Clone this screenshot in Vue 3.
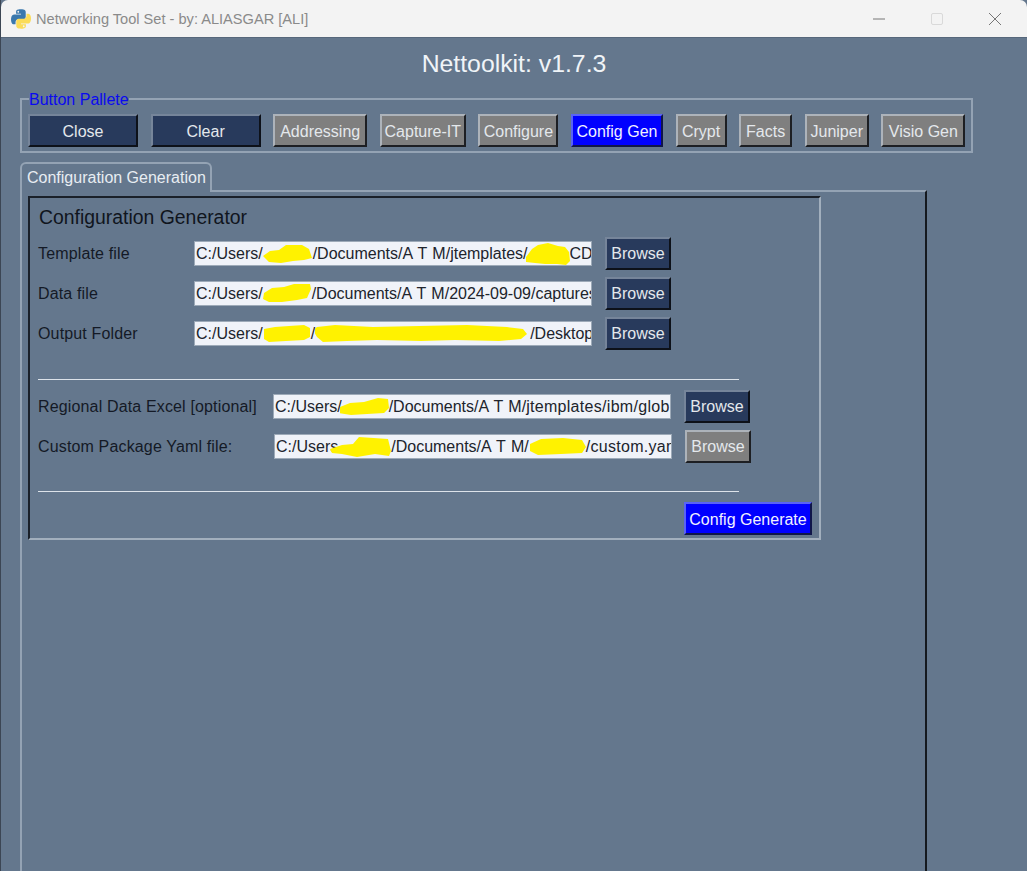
<script setup>
const paletteButtons = [
  { label: "Close", kind: "navy", width: 110 },
  { label: "Clear", kind: "navy", width: 110 },
  { label: "Addressing", kind: "grey", width: 94 },
  { label: "Capture-IT", kind: "grey", width: 86 },
  { label: "Configure", kind: "grey", width: 80 },
  { label: "Config Gen", kind: "blue", width: 92 },
  { label: "Crypt", kind: "grey", width: 51 },
  { label: "Facts", kind: "grey", width: 53 },
  { label: "Juniper", kind: "grey", width: 64 },
  { label: "Visio Gen", kind: "grey", width: 84 },
];
</script>

<template>
  <div class="window">
    <header class="titlebar">
      <svg class="logo" viewBox="0 0 110 110">
        <path
          fill="#3a78ad"
          d="M54 2c-5 0-9 .4-13 1.100C30 5 28 9 28 16v10h27v4H18C10 30 4 35 2 44c-2.500 10-2.500 17 0 27 2 8 6 13 14 13h9V72c0-9 8-16 16-16h27c7 0 13-6 13-13V16c0-7-6-12-13-13.500C64 2.300 59 2 54 2zM40 10a5 5 0 1 1 0 10 5 5 0 0 1 0-10z"
        />
        <path
          fill="#fbdc57"
          transform="rotate(180 55 55)"
          d="M54 2c-5 0-9 .4-13 1.100C30 5 28 9 28 16v10h27v4H18C10 30 4 35 2 44c-2.500 10-2.500 17 0 27 2 8 6 13 14 13h9V72c0-9 8-16 16-16h27c7 0 13-6 13-13V16c0-7-6-12-13-13.500C64 2.300 59 2 54 2zM40 10a5 5 0 1 1 0 10 5 5 0 0 1 0-10z"
        />
      </svg>
      <span class="window-title">Networking Tool Set - by: ALIASGAR [ALI]</span>
      <div class="controls">
        <span class="control"><svg viewBox="0 0 14 14"><path d="M1 7h12" /></svg></span>
        <span class="control"><svg class="off" viewBox="0 0 14 14"><rect x="1.500" y="1.500" width="11" height="11" rx="1.500" /></svg></span>
        <span class="control"><svg viewBox="0 0 14 14"><path d="M1 1l12 12M13 1L1 13" /></svg></span>
      </div>
    </header>

    <main class="content">
      <h1 class="app-title">Nettoolkit: v1.7.3</h1>

      <fieldset class="palette">
        <legend>Button Pallete</legend>
        <button
          v-for="btn in paletteButtons"
          :key="btn.label"
          class="btn"
          :class="btn.kind"
          :style="{ width: btn.width + 'px' }"
        >
          {{ btn.label }}
        </button>
      </fieldset>

      <div class="tab">Configuration Generation</div>

      <section class="tab-body">
        <div class="frame">
          <h2>Configuration Generator</h2>

          <div class="row">
            <label class="label">Template file</label>
            <div class="field">C:/Users/<svg class="blot" width="50" height="22" viewBox="0 0 50 22" preserveAspectRatio="none"><path d="M0 14 7 9l9-1 7-5 16 0 7 4 3 9-8 2-11 1-12 2-12-1z" /></svg>/Documents/A T M/jtemplates/<svg class="blot pull" width="44" height="24" viewBox="0 0 44 24" preserveAspectRatio="none"><path d="M0 16 6 8l6-4 10-2 10 3 7 1 4 5 1 9-4 4-9-1-12 0-10-1-9-1z" /></svg>CD</div>
            <button class="btn navy browse">Browse</button>
          </div>
          <div class="row">
            <label class="label">Data file</label>
            <div class="field">C:/Users/<svg class="blot" width="49" height="22" viewBox="0 0 49 22" preserveAspectRatio="none"><path d="M1 11 9 6l12-1 10-3 16 0 1 5-4 9-10 2-15 2-13 0-6-3z" /></svg>/Documents/A T M/2024-09-09/captures</div>
            <button class="btn navy browse">Browse</button>
          </div>
          <div class="row">
            <label class="label">Output Folder</label>
            <div class="field">C:/Users/<svg class="blot" width="48" height="20" viewBox="0 0 48 20" preserveAspectRatio="none"><path d="M1 6 12 4l14-1 15-1 6 3 0 9-6 3-18 1-17 1-5-3z" /></svg>/<svg class="blot" width="215" height="22" viewBox="0 0 215 22" preserveAspectRatio="none"><path d="M2 5 20 3l38 2 46-1 48-1 40 2 16 2 4 5-6 5-22 2-44-1-34 1-44-1-30 1-24 1-6-5-4-7z" /></svg>/Desktop</div>
            <button class="btn navy browse">Browse</button>
          </div>

          <hr class="rule" />

          <div class="row">
            <label class="label long">Regional Data Excel [optional]</label>
            <div class="field">C:/Users/<svg class="blot pull" width="49" height="18" viewBox="0 0 49 18" preserveAspectRatio="none"><path d="M0 10 10 6l14-1 14-4 10 1 1 9-5 5-17 1-16 1-12-2z" /></svg>/Documents/A T M/<span class="tail">jtemplates/ibm/glob</span></div>
            <button class="btn navy browse">Browse</button>
          </div>
          <div class="row second">
            <label class="label long">Custom Package Yaml file:</label>
            <div class="field">C:/Users<svg class="blot deep" width="61" height="22" viewBox="0 0 61 22" preserveAspectRatio="none"><path d="M0 14 12 10l11-1 6-7 29 2 3 12-2 5-14-2-18 3-15-3-10-1z" /></svg>/Documents/A T M/<svg class="blot" width="57" height="20" viewBox="0 0 57 20" preserveAspectRatio="none"><path d="M1 8 12 3l22-1 19 2 4 7-4 6-21 1-23 1-8-4z" /></svg><span class="tail">/custom.yaml</span></div>
            <button class="btn grey browse">Browse</button>
          </div>

          <hr class="rule lower" />

          <div class="actions">
            <button class="btn blue generate">Config Generate</button>
          </div>
        </div>
      </section>
    </main>
  </div>
</template>

<style scoped>
.window {
  width: 1027px;
  height: 871px;
  overflow: hidden;
  display: flex;
  flex-direction: column;
  background: #64778d;
  font-family: "Liberation Sans", Arial, sans-serif;
  border-left: 1px solid #3c4654;
  box-sizing: border-box;
}

.titlebar {
  height: 37px;
  flex: none;
  background: #f3f3f3;
  display: flex;
  align-items: center;
  border-top-left-radius: 7px;
  border-top-right-radius: 7px;
  border-bottom: 1px solid #56677b;
  box-sizing: content-box;
}

.logo {
  width: 20px;
  height: 20px;
  margin-left: 10px;
  margin-right: 5px;
}

.window-title {
  font-size: 14.6px;
  color: #8a8a8a;
}

.controls {
  margin-left: auto;
  display: flex;
  margin-right: 3px;
}

.control {
  width: 58px;
  display: flex;
  justify-content: center;
}

.control svg {
  width: 14px;
  height: 14px;
  fill: none;
  stroke: #767676;
  stroke-width: 1;
}

.control svg.off {
  stroke: #d9d9d9;
}

.content {
  flex: 1;
  padding-left: 19px;
  min-height: 0;
}

.app-title {
  margin: 0 0 0 -19px;
  height: 51px;
  padding-top: 11px;
  box-sizing: border-box;
  text-align: center;
  font-size: 24.8px;
  line-height: 30px;
  font-weight: normal;
  color: #f0f4f8;
}

.palette {
  width: 953px;
  height: 64px;
  margin: 0;
  padding: 0 0 0 6px;
  box-sizing: border-box;
  border: 2px solid #94a3b4;
  display: flex;
  align-items: flex-start;
  gap: 12.6px;
}

.palette legend {
  font-size: 16px;
  line-height: 18px;
  color: #0a0af0;
  padding: 2px 0 0;
  margin-left: 1px;
}

.btn {
  height: 33px;
  padding: 2px 0 0;
  box-sizing: border-box;
  border: 2px solid;
  font-family: inherit;
  font-size: 16px;
  color: #e4e8ec;
  white-space: nowrap;
  cursor: pointer;
}

.palette .btn {
  margin-top: 5px;
}

.navy {
  background: #283a5c;
  border-color: #76859a #0d1119 #0d1119 #76859a;
}

.grey {
  background: #7f7f7f;
  border-color: #adb3ba #1d1f23 #1d1f23 #adb3ba;
}

.blue {
  background: #0000ff;
  color: #f2f2ff;
  border-color: #5a63f5 #10164a #10164a #5a63f5;
}

.tab {
  width: 192px;
  height: 30px;
  margin-top: 9px;
  box-sizing: border-box;
  padding: 5px 0 0 5px;
  border: 2px solid #94a3b4;
  border-bottom: none;
  border-radius: 6px 6px 0 0;
  font-size: 16px;
  line-height: 18px;
  color: #e8edf2;
  position: relative;
  z-index: 1;
  background: #64778d;
}

.tab-body {
  width: 907px;
  height: 690px;
  margin-top: -2px;
  box-sizing: border-box;
  padding: 4px 0 0 6px;
  border-top: 2px solid #94a3b4;
  border-left: 2px solid #94a3b4;
  border-right: 2px solid #15191f;
}

.frame {
  width: 793px;
  height: 344px;
  box-sizing: border-box;
  padding: 7px 7px 0 9px;
  border: 2px solid;
  border-color: #1a2029 #a2afbd #a2afbd #1a2029;
}

.frame h2 {
  margin: 0;
  height: 32px;
  font-size: 19.4px;
  line-height: 24px;
  font-weight: normal;
  color: #10151d;
}

.row {
  display: flex;
  align-items: center;
  height: 32px;
  margin-bottom: 8px;
  gap: 13px;
}

.label {
  width: 143px;
  flex: none;
  margin-left: -1px;
  padding-top: 1px;
  font-size: 16px;
  letter-spacing: 0.15px;
  color: #141a26;
  white-space: nowrap;
}

.label.long {
  width: 222px;
}

.second .label.long {
  width: 223px;
}

.field {
  width: 398px;
  height: 25px;
  flex: none;
  box-sizing: border-box;
  padding-left: 1px;
  border: 1px solid #9daab8;
  background: #f0f3f9;
  font-size: 16px;
  line-height: 23px;
  word-spacing: 1px;
  color: #20242c;
  white-space: nowrap;
  overflow: hidden;
}

.tail {
  letter-spacing: 0.3px;
}

.blot {
  vertical-align: middle;
  margin-top: -2px;
}

.blot.pull {
  margin-left: -2px;
}

.blot.deep {
  margin-left: -8px;
}

.blot path {
  fill: #fff200;
}

.browse {
  width: 66px;
}

.generate {
  width: 128px;
}

.rule {
  width: 701px;
  height: 1px;
  margin: 30px 0 10px -1px;
  border: none;
  background: #dde3ea;
}

.rule.lower {
  margin-top: 29px;
  margin-bottom: 10px;
}

.actions {
  display: flex;
  justify-content: flex-end;
}
</style>

<style>
html,
body {
  margin: 0;
  overflow: hidden;
  background: #1c2026;
}
</style>
